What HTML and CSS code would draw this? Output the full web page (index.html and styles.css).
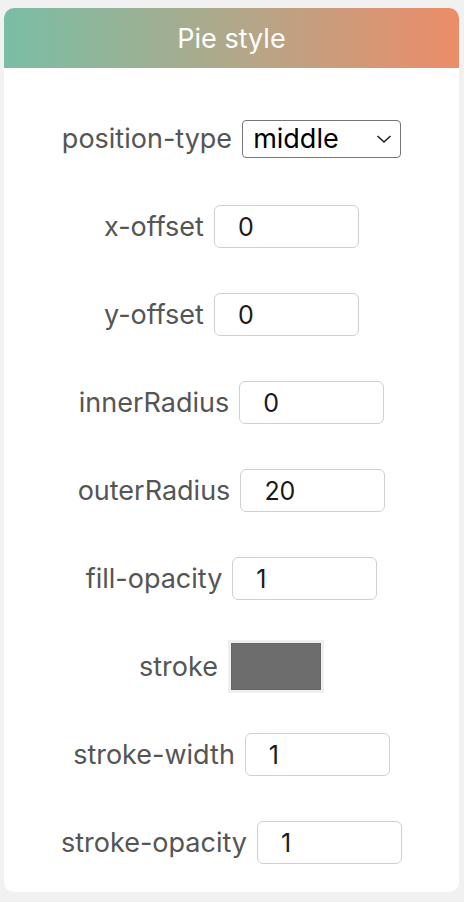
FILE: index.html
```html
<!DOCTYPE html>
<html>
<head>
<meta charset="utf-8">
<link rel="stylesheet" href="styles.css">
</head>
<body>
<div class="card">
  <div class="header">Pie style</div>
  <div class="body">
    <div class="row">
      <span class="label">position-type</span>
      <div class="select"><span>middle</span>
        <svg class="chev" width="16" height="10" viewBox="0 0 16 10"><path d="M1.5 2 L8 8 L14.5 2" fill="none" stroke="#222" stroke-width="1.6"/></svg>
      </div>
    </div>
    <div class="row"><span class="label">x-offset</span><div class="input">0</div></div>
    <div class="row"><span class="label">y-offset</span><div class="input">0</div></div>
    <div class="row"><span class="label">innerRadius</span><div class="input">0</div></div>
    <div class="row"><span class="label">outerRadius</span><div class="input">20</div></div>
    <div class="row"><span class="label">fill-opacity</span><div class="input">1</div></div>
    <div class="row"><span class="label">stroke</span><div class="color"><div class="swatch"></div></div></div>
    <div class="row"><span class="label">stroke-width</span><div class="input">1</div></div>
    <div class="row"><span class="label">stroke-opacity</span><div class="input">1</div></div>
  </div>
</div>
</body>
</html>
```
FILE: styles.css
```css
html, body {
  margin: 0;
  padding: 0;
  background: #f1f1f1;
}
body {
  padding: 8px 5px 0 4px;
  font-family: Inter, "Liberation Sans", sans-serif;
}
.card {
  background: #fff;
  border-radius: 10px;
  overflow: hidden;
  height: 884px;
  display: flex;
  flex-direction: column;
}
.header {
  height: 60px;
  background: linear-gradient(to right, #79bea5, #b0a88a 50%, #ed8c68);
  color: #fff;
  font-size: 27px;
  display: flex;
  align-items: center;
  justify-content: center;
}
.body {
  padding-top: 49px;
  display: flex;
  flex-direction: column;
  gap: 45px;
}
.row {
  height: 43px;
  display: flex;
  align-items: center;
  justify-content: center;
  gap: 10px;
}
.label {
  font-size: 27px;
  color: #555;
}
.select {
  width: 159px;
  height: 38px;
  box-sizing: border-box;
  border: 1px solid #767676;
  border-radius: 4px;
  display: flex;
  align-items: center;
  justify-content: space-between;
  padding: 0 8px 0 10px;
  font-size: 27px;
  color: #000;
}
.input {
  width: 145px;
  height: 43px;
  box-sizing: border-box;
  border: 1px solid #d0d0d0;
  border-radius: 6px;
  display: flex;
  align-items: center;
  padding-left: 23px;
  font-size: 25px;
  color: #1a1a1a;
}
.color {
  width: 96px;
  height: 53px;
  box-sizing: border-box;
  background: #efefef;
  padding: 3px;
}
.swatch {
  width: 100%;
  height: 100%;
  box-sizing: border-box;
  background: #6d6d6d;
  border: 1px solid #666;
}
```
